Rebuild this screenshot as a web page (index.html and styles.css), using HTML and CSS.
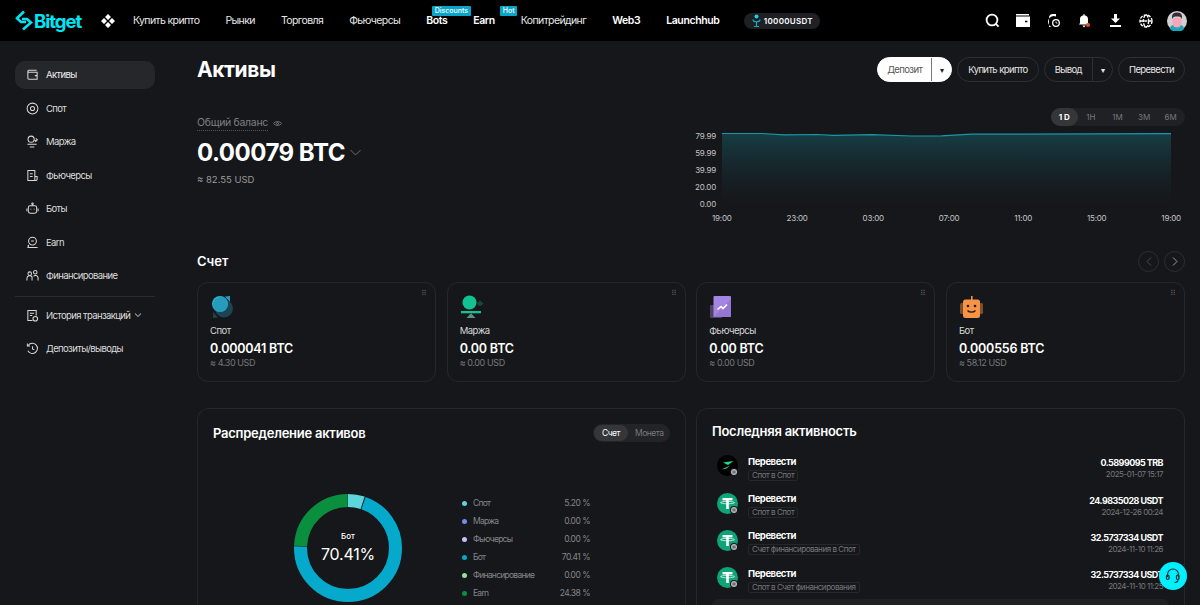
FILE: index.html
```html
<!DOCTYPE html>
<html lang="ru">
  <head>
    <meta charset="UTF-8" />
    <meta name="viewport" content="width=device-width, initial-scale=1.0" />
    <title>Активы</title>
    <link rel="stylesheet" href="styles.css">
  </head>
  <body>
    <svg class="defs" width="0" height="0">
      <symbol id="usdt" viewBox="0 0 21 21">
        <circle cx="10.5" cy="10.5" r="10.5" fill="#0fa37a" />
        <rect x="5.5" y="5" width="10" height="2.4" fill="#fff" />
        <rect x="9.2" y="5" width="2.6" height="11" fill="#fff" />
        <ellipse cx="10.5" cy="9.6" rx="7" ry="1.2" fill="none" stroke="#fff" stroke-width=".7" />
      </symbol>
      <symbol id="badge" viewBox="0 0 8 8">
        <circle cx="4" cy="4" r="4" fill="#16171a" />
        <circle cx="4" cy="4" r="3" fill="#b9babd" />
        <path d="M2.4 3.2h3.2M2.4 4.8h3.2" stroke="#333" stroke-width=".8" />
      </symbol>
    </svg>

    <!-- Шапка -->
    <header class="topbar">
      <a class="logo">
        <svg width="18" height="21" viewBox="0 0 18 21" fill="none" stroke="#00e5f5" stroke-width="2.6">
          <path d="M9 1.5 2 8.2l4 3.8h5" />
          <path d="M8 19.5l8-7-4-3.5H7" />
        </svg>
        <span>Bitget</span>
      </a>
      <svg class="apps" width="14" height="14" viewBox="0 0 14 14" fill="#fff">
        <path d="M7 0l3 3-3 3-3-3zM3 4l3 3-3 3-3-3zM11 4l3 3-3 3-3-3zM7 8l3 3-3 3-3-3z" />
      </svg>
      <nav class="topnav">
        <a>Купить крипто</a>
        <a>Рынки</a>
        <a>Торговля</a>
        <a>Фьючерсы</a>
        <a class="strong">Bots<span class="tag">Discounts</span></a>
        <a class="strong">Earn<span class="tag tag-hot">Hot</span></a>
        <a>Копитрейдинг</a>
        <a class="strong">Web3</a>
        <a class="strong">Launchhub</a>
      </nav>
      <div class="promo">
        <svg width="9" height="14" viewBox="0 0 9 14" fill="none" stroke="#1aa9bd" stroke-width="1.2">
          <circle cx="4.5" cy="2.5" r="2" fill="#1fd0e6" stroke="none" />
          <path d="M1 5.5c0 3 7 3 7 0M4.5 8v4M2 12.5h5" />
        </svg>
        10000USDT
      </div>
      <div class="top-icons">
        <svg width="15" height="15" viewBox="0 0 15 15" fill="none" stroke="#fff" stroke-width="1.8"><circle cx="7" cy="7" r="5.4" /><path d="M10.8 10.8 13.6 13.6" /></svg>
        <svg width="14" height="13" viewBox="0 0 14 13" fill="#fff"><path d="M0 0h13v1.6H0zM0 2.6h14V13H0zM9 6.7v1.6h2.4V6.7z" fill-rule="evenodd" /></svg>
        <svg width="12" height="13" viewBox="0 0 12 13" fill="#fff"><path d="M1 13V4a4 4 0 0 1 4-4h3v2.4A5 5 0 0 0 3.6 13z" /><circle cx="8" cy="9" r="3.3" fill="none" stroke="#fff" stroke-width="1.3" /><path d="M8 7.5V9h1.400" stroke="#fff" fill="none" stroke-width=".8" /></svg>
        <svg width="13" height="14" viewBox="0 0 13 14" fill="#fff"><path d="M5.5 0h1v1.200A4 4 0 0 1 10 5v4l1 1.500H1L2 9V5a4 4 0 0 1 3.5-3.800zM4.300 11.500h3.400L6 13.500z" /><circle cx="10" cy="11" r="2" fill="#f4481e" /></svg>
        <svg width="11" height="13" viewBox="0 0 11 13" fill="#fff"><path d="M4 0h3v4.500h3L5.500 9 1 4.500h3zM0 11h11v2H0z" /></svg>
        <svg width="14" height="14" viewBox="0 0 14 14" fill="none" stroke="#fff" stroke-width="1.4" stroke-dasharray="3 1.2"><circle cx="7" cy="7" r="6" /><ellipse cx="7" cy="7" rx="2.6" ry="6" /><path d="M1 7h12" /></svg>
        <svg width="20" height="20" viewBox="0 0 20 20">
          <circle cx="10" cy="10" r="10" fill="#cfd0d2" />
          <path d="M3 18c0-3.500 3-4.500 7-4.500s7 1 7 4.500a10 10 0 0 1-14 0z" fill="#18a6b8" />
          <path d="M5.500 7h9v5a4.500 4.500 0 0 1-9 0z" fill="#f8a5bb" />
          <path d="M5 8V5.500C5 3 7 1.500 10 1.500S15 3 15 5.500V8c-1-2-2-2.500-5-2.500S6 6 5 8z" fill="#3a2a33" />
        </svg>
      </div>
    </header>

    <div class="layout">
      <!-- Меню слева -->
      <aside class="sidebar">
        <a class="side-item active">
          <svg viewBox="0 0 14 14"><path d="M2 3.500V11a1 1 0 0 0 1 1h9V4.500H3a1 1 0 0 1-1-1 1 1 0 0 1 1-1h8.500M9.500 8.200h2.500" /></svg>
          Активы
        </a>
        <a class="side-item">
          <svg viewBox="0 0 14 14"><circle cx="7" cy="7" r="5.8" /><circle cx="7" cy="7" r="2.2" /></svg>
          Спот
        </a>
        <a class="side-item">
          <svg viewBox="0 0 14 14"><circle cx="5.5" cy="4.5" r="3.3" /><path d="M10.500 3.500l1.700 1.700-1.700 1.700-1.400-1.700M1.500 10h10M4 12.800h5" /></svg>
          Маржа
        </a>
        <a class="side-item">
          <svg viewBox="0 0 14 14"><path d="M2 1.500h7.500v11H2zM4.200 5h3M4.200 8h3M9.500 8h2.500v3a1.500 1.500 0 0 1-2.500 1" /></svg>
          Фьючерсы
        </a>
        <a class="side-item">
          <svg viewBox="0 0 14 14"><rect x="2.5" y="4" width="9" height="8" rx="2" /><circle cx="7" cy="1.800" r=".8" /><path d="M7 2.600V4M1 7v3M13 7v3M5.200 7.200v1M8.800 7.200v1" /></svg>
          Боты
        </a>
        <a class="side-item">
          <svg viewBox="0 0 14 14"><circle cx="7" cy="5.5" r="4.2" /><path d="M5.500 5.500h3M1.500 12.500h11M3 9.500c-1 1-1 2 0 3" /></svg>
          Earn
        </a>
        <a class="side-item">
          <svg viewBox="0 0 14 14"><circle cx="4" cy="5" r="1.9" /><circle cx="10" cy="3.5" r="1.9" /><path d="M1 12.500V10a3 3 0 0 1 5.500-1.500V12.500M8 7.800A3 3 0 0 1 13 9v3.500" /></svg>
          Финансирование
        </a>
        <hr class="side-line" />
        <a class="side-item">
          <svg viewBox="0 0 14 14"><path d="M7 12.500H2V1.500h9v5.500M4.200 4.500h4.500M4.200 7h2.500" /><circle cx="10" cy="10.5" r="2.5" /></svg>
          История транзакций
          <svg class="caret" viewBox="0 0 8 8"><path d="M1 2.500l3 3 3-3" /></svg>
        </a>
        <a class="side-item">
          <svg viewBox="0 0 14 14"><path d="M2.500 3.500A5.500 5.500 0 1 1 2 9.500M1.500 1.500v2.800h2.800M7 4.500V7.500l2 1" /></svg>
          Депозиты/выводы
        </a>
      </aside>

      <main class="content">
        <div class="page-head">
          <h1>Активы</h1>
          <div class="actions">
            <div class="btn split light"><span>Депозит</span><i>&#9662;</i></div>
            <div class="btn">Купить крипто</div>
            <div class="btn split"><span>Вывод</span><i>&#9662;</i></div>
            <div class="btn">Перевести</div>
          </div>
        </div>

        <section class="overview">
          <div class="balance">
            <div class="balance-label">
              <span>Общий баланс</span>
              <svg width="9" height="7" viewBox="0 0 9 7" fill="none" stroke="#77787c"><path d="M.5 3.500C2 1 7 1 8.500 3.500 7 6 2 6 .5 3.500z" /><circle cx="4.5" cy="3.5" r="1" /></svg>
            </div>
            <div class="balance-value">
              0.00079 BTC
              <svg width="11" height="7" viewBox="0 0 11 7" fill="none" stroke="#6b6c70"><path d="M.5 1l5 5 5-5" /></svg>
            </div>
            <div class="balance-usd">≈ 82.55 USD</div>
          </div>

          <div class="chart">
            <div class="range">
              <span class="on">1 D</span><span>1H</span><span>1M</span><span>3M</span><span>6M</span>
            </div>
            <div class="plot-row">
              <div class="y-axis">
                <span>79.99</span><span>59.99</span><span>39.99</span><span>20.00</span><span>0.00</span>
              </div>
              <svg class="plot" width="449" height="72" viewBox="0 0 450 72" preserveAspectRatio="none">
                <defs>
                  <linearGradient id="area" x1="0" y1="0" x2="0" y2="1">
                    <stop offset="0" stop-color="#16444c" stop-opacity=".85" />
                    <stop offset="1" stop-color="#16171a" stop-opacity=".4" />
                  </linearGradient>
                </defs>
                <path d="M0 1.500 40 1.500 62 2.800 95 2.500 112 3.300 150 2.700 190 4 220 3.900 250 2.200 300 2.200 450 1.700V72H0z" fill="url(#area)" />
                <path d="M0 1.500 40 1.500 62 2.800 95 2.500 112 3.300 150 2.700 190 4 220 3.900 250 2.200 300 2.200 450 1.700" fill="none" stroke="#1a97a6" stroke-width="1.2" />
              </svg>
            </div>
            <div class="x-axis">
              <span>19:00</span><span>23:00</span><span>03:00</span><span>07:00</span><span>11:00</span><span>15:00</span><span>19:00</span>
            </div>
          </div>
        </section>

        <div class="section-head">
          <h2>Счет</h2>
          <div class="arrows">
            <span class="dim"><svg width="6" height="9" viewBox="0 0 6 9"><path d="M5 .5l-4 4 4 4" /></svg></span>
            <span><svg width="6" height="9" viewBox="0 0 6 9"><path d="M1 .5l4 4-4 4" /></svg></span>
          </div>
        </div>

        <section class="accounts">
          <div class="card">
            <span class="grip">⠿</span>
            <svg class="card-icon" width="24" height="24" viewBox="0 0 24 24">
              <path d="M20 1v6l-5-5.500z" fill="#1f9fc0" />
              <path d="M3 23v-6l5 5.500z" fill="#20424d" />
              <circle cx="14" cy="13.500" r="9" fill="#1d4452" />
              <circle cx="10" cy="9" r="8" fill="#25b5d6" />
              <path d="M15 3a8 8 0 0 1-8 13.500A6 6 0 0 1 15 3z" fill="#2a8aa8" opacity=".6" />
            </svg>
            <div class="card-name">Спот</div>
            <div class="card-value">0.000041 BTC</div>
            <div class="card-usd">≈ 4.30 USD</div>
          </div>
          <div class="card">
            <span class="grip">⠿</span>
            <svg class="card-icon" width="24" height="24" viewBox="0 0 24 24">
              <circle cx="9.5" cy="7.5" r="7" fill="#12c293" />
              <path d="M20 5.500l3.500 3-3.500 3-3.500-3z" fill="#124a3c" />
              <rect x="1" y="16" width="20" height="2.3" fill="#12c293" />
              <path d="M11 18.300l4.500 4.700h-9z" fill="#5e8f7f" />
            </svg>
            <div class="card-name">Маржа</div>
            <div class="card-value">0.00 BTC</div>
            <div class="card-usd">≈ 0.00 USD</div>
          </div>
          <div class="card">
            <span class="grip">⠿</span>
            <svg class="card-icon" width="24" height="24" viewBox="0 0 24 24">
              <rect x="1" y="10" width="12" height="13" rx="1" fill="#4c4461" />
              <path d="M4.500 2a1 1 0 0 1 1-1H21a1 1 0 0 1 1 1v19a1 1 0 0 1-1 1H4.500z" fill="#a585e4" />
              <path d="M4.500 22 22 4v17a1 1 0 0 1-1 1z" fill="#8e70cc" opacity=".7" />
              <path d="M8.500 14.500l3.500-3 2 2 4-4" fill="none" stroke="#fff" stroke-width="1.6" />
            </svg>
            <div class="card-name">Фьючерсы</div>
            <div class="card-value">0.00 BTC</div>
            <div class="card-usd">≈ 0.00 USD</div>
          </div>
          <div class="card">
            <span class="grip">⠿</span>
            <svg class="card-icon" width="25" height="24" viewBox="0 0 25 24">
              <rect x="1" y="8" width="4" height="11" rx="1.5" fill="#7c4f2c" />
              <rect x="20" y="8" width="4" height="11" rx="1.5" fill="#7c4f2c" />
              <rect x="12" y="1" width="1.6" height="6" fill="#f59347" />
              <rect x="4" y="4.5" width="17" height="18.5" rx="2.5" fill="#f59347" />
              <circle cx="9" cy="11" r="1.3" fill="#2a1a0c" />
              <circle cx="16" cy="11" r="1.3" fill="#2a1a0c" />
              <path d="M8.500 15.500c2 2.200 6 2.200 8 0" fill="none" stroke="#2a1a0c" stroke-width="1.3" />
            </svg>
            <div class="card-name">Бот</div>
            <div class="card-value">0.000556 BTC</div>
            <div class="card-usd">≈ 58.12 USD</div>
          </div>
        </section>

        <section class="panels">
          <div class="panel">
            <div class="panel-head">
              <h3>Распределение активов</h3>
              <div class="switch"><span class="on">Счет</span><span>Монета</span></div>
            </div>
            <div class="dist">
              <div class="donut">
                <svg width="108" height="108" viewBox="0 0 108 108" fill="none" stroke-width="13">
                  <g transform="rotate(-90 54 54)">
                    <circle cx="54" cy="54" r="47.5" stroke="#5dd5dc" pathLength="100" stroke-dasharray="5 95" stroke-dashoffset="0" />
                    <circle cx="54" cy="54" r="47.5" stroke="#04a9cb" pathLength="100" stroke-dasharray="70.2 29.8" stroke-dashoffset="-5.3" />
                    <circle cx="54" cy="54" r="47.5" stroke="#0a8f3f" pathLength="100" stroke-dasharray="24.2 75.8" stroke-dashoffset="-75.7" />
                  </g>
                </svg>
                <div class="donut-text">
                  <small>Бот</small>
                  <b>70.41%</b>
                </div>
              </div>
              <ul class="legend">
                <li><i class="dot c1"></i><span>Спот</span><em>5.20 %</em></li>
                <li><i class="dot c2"></i><span>Маржа</span><em>0.00 %</em></li>
                <li><i class="dot c3"></i><span>Фьючерсы</span><em>0.00 %</em></li>
                <li><i class="dot c4"></i><span>Бот</span><em>70.41 %</em></li>
                <li><i class="dot c5"></i><span>Финансирование</span><em>0.00 %</em></li>
                <li><i class="dot c6"></i><span>Earn</span><em>24.38 %</em></li>
              </ul>
            </div>
          </div>

          <div class="panel activity">
            <h3>Последняя активность</h3>
            <div class="row">
              <div class="coin">
                <svg width="21" height="21" viewBox="0 0 21 21"><circle cx="10.5" cy="10.5" r="10.5" fill="#000" /><path d="M6 7.500 16.500 6 11 10zM4.500 14.500 13 10.500 9.500 13.500z" fill="#19e08c" /></svg>
                <svg class="badge" width="8" height="8"><use href="#badge" /></svg>
              </div>
              <div class="row-main"><b>Перевести</b><span class="pill">Спот в Спот</span></div>
              <div class="row-side"><b>0.5899095 TRB</b><span>2025-01-07 15:17</span></div>
            </div>
            <div class="row">
              <div class="coin">
                <svg width="21" height="21"><use href="#usdt" /></svg>
                <svg class="badge" width="8" height="8"><use href="#badge" /></svg>
              </div>
              <div class="row-main"><b>Перевести</b><span class="pill">Спот в Спот</span></div>
              <div class="row-side"><b>24.9835028 USDT</b><span>2024-12-26 00:24</span></div>
            </div>
            <div class="row">
              <div class="coin">
                <svg width="21" height="21"><use href="#usdt" /></svg>
                <svg class="badge" width="8" height="8"><use href="#badge" /></svg>
              </div>
              <div class="row-main"><b>Перевести</b><span class="pill">Счет финансирования в Спот</span></div>
              <div class="row-side"><b>32.5737334 USDT</b><span>2024-11-10 11:26</span></div>
            </div>
            <div class="row">
              <div class="coin">
                <svg width="21" height="21"><use href="#usdt" /></svg>
                <svg class="badge" width="8" height="8"><use href="#badge" /></svg>
              </div>
              <div class="row-main"><b>Перевести</b><span class="pill">Спот в Счет финансирования</span></div>
              <div class="row-side"><b>32.5737334 USDT</b><span>2024-11-10 11:25</span></div>
            </div>
            <div class="row hovered">
              <div class="coin">
                <svg width="21" height="21"><use href="#usdt" /></svg>
              </div>
            </div>
          </div>
        </section>
      </main>
    </div>

    <a class="support">
      <svg width="16" height="16" viewBox="0 0 16 16" fill="none" stroke="#0c2a30" stroke-width="1.2">
        <path d="M2.500 9V6.500a5.500 5.500 0 0 1 11 0V9" />
        <rect x="1.5" y="7" width="2.5" height="4.5" rx="1.2" />
        <rect x="11.5" y="7" width="2.5" height="4.5" rx="1.2" />
        <path d="M13 11.500c0 2-1.500 3-3.500 3" />
      </svg>
    </a>
  </body>
</html>
```

FILE: styles.css
```css
* {
  box-sizing: border-box;
}
html,
body {
  height: 605px;
  overflow: hidden;
}
body {
  margin: 0;
  font-family: Inter, "Liberation Sans", sans-serif;
  background: #16171a;
  color: #fff;
  font-size: 11px;
}
h1,
h2,
h3 {
  margin: 0;
}
.defs {
  position: absolute;
}

/* Шапка */
.topbar {
  height: 41px;
  background: #000;
  display: flex;
  align-items: center;
  padding: 0 7.6px 0 15px;
}
.logo {
  display: flex;
  align-items: center;
  gap: 1px;
  color: #00e5f5;
  font-size: 18.5px;
  font-weight: 700;
  letter-spacing: -1px;
  width: 86px;
}
.apps {
  margin-right: 18px;
}
.topnav {
  display: flex;
  gap: 26px;
}
.topnav a {
  position: relative;
  font-size: 10.5px;
  letter-spacing: -0.61px;
  color: #e8e8e8;
}
.topnav a.strong {
  font-weight: 600;
  letter-spacing: -0.4px;
  color: #fff;
}
.tag {
  position: absolute;
  left: 6px;
  top: -8px;
  background: #08a5c8;
  color: #fff;
  font-size: 7px;
  font-weight: 500;
  letter-spacing: 0;
  line-height: 10px;
  padding: 0 2.5px;
  border-radius: 1px;
  white-space: nowrap;
}
.tag-hot {
  left: 27px;
}
.promo {
  margin-left: 25px;
  width: 76px;
  height: 16px;
  border-radius: 8px;
  background: #1e2023;
  display: flex;
  align-items: center;
  justify-content: center;
  gap: 3px;
  font-size: 8px;
  font-weight: 600;
  letter-spacing: 0.3px;
}
.top-icons {
  margin-left: auto;
  display: grid;
  grid-template-columns: repeat(7, 30.8px);
  justify-items: center;
  align-items: center;
}

/* Меню */
.layout {
  display: flex;
}
.sidebar {
  width: 197px;
  flex: none;
  padding: 20px 42px 0 15px;
}
.side-item {
  height: 28px;
  margin-bottom: 5.5px;
  display: flex;
  align-items: center;
  gap: 7px;
  padding: 0 0 1px 11px;
  border-radius: 10px;
  color: #dcdcdc;
  font-size: 9.5px;
  letter-spacing: -0.62px;
  white-space: nowrap;
}
.side-item.active {
  background: #26272b;
  color: #eee;
}
.side-item svg {
  width: 13px;
  height: 13px;
  fill: none;
  stroke: #d8d8d8;
  stroke-width: 1.1;
  flex: none;
}
.side-item svg.caret {
  width: 8px;
  height: 8px;
  stroke: #8a8b8f;
  margin-left: -3px;
}
.side-line {
  border: 0;
  border-top: 1px solid #2a2b2f;
  margin: 0 0 5px;
}

/* Основная часть */
.content {
  width: 988px;
  padding-top: 16px;
}
.page-head {
  display: flex;
  justify-content: space-between;
  align-items: center;
  height: 25px;
}
h1 {
  font-size: 21px;
  font-weight: 700;
  letter-spacing: -0.4px;
}
.actions {
  display: flex;
  gap: 5px;
}
.btn {
  height: 25px;
  border: 1px solid #2e2f33;
  border-radius: 13px;
  padding: 0 10px;
  display: flex;
  align-items: center;
  font-size: 9.5px;
  letter-spacing: -0.6px;
  color: #e6e6e6;
}
.btn.split {
  padding: 0;
}
.btn.split span {
  padding: 0 10px;
  height: 100%;
  display: flex;
  align-items: center;
  border-right: 1px solid #2e2f33;
}
.btn.split i {
  width: 19px;
  text-align: center;
  font-style: normal;
  font-size: 8px;
}
.btn.light {
  background: #fff;
  border-color: #fff;
  color: #555;
}
.btn.light span {
  width: 54px;
  justify-content: center;
  border-right-color: #777;
}
.btn.light i {
  color: #222;
}

.overview {
  display: flex;
  justify-content: space-between;
  margin-top: 26px;
  height: 141px;
}
.balance-label {
  margin-top: 8px;
  display: flex;
  align-items: center;
  gap: 5px;
  color: #7d7e82;
  font-size: 10.5px;
  letter-spacing: -0.3px;
}
.balance-label span {
  border-bottom: 1px dotted #55565a;
  padding-bottom: 1px;
}
.balance-value {
  margin-top: 7px;
  display: flex;
  align-items: center;
  gap: 5px;
  font-size: 24px;
  font-weight: 700;
  letter-spacing: -0.5px;
}
.balance-usd {
  margin-top: 7px;
  font-size: 9.5px;
  color: #9a9b9f;
}

.chart {
  width: 495px;
}
.range {
  width: 134px;
  height: 18px;
  margin-left: auto;
  border-radius: 9px;
  background: #202125;
  display: flex;
  align-items: center;
  font-size: 8px;
  color: #77787c;
}
.range span {
  width: 26.6px;
  text-align: center;
}
.range .on {
  height: 18px;
  line-height: 18px;
  border-radius: 9px;
  background: #35363a;
  color: #fff;
  font-weight: 700;
}
.plot-row {
  display: flex;
  justify-content: space-between;
  margin-top: 6px;
  width: 481px;
}
.plot {
  display: block;
}
.y-axis {
  width: 26px;
  height: 79px;
  margin-top: -1px;
  display: flex;
  flex-direction: column;
  justify-content: space-between;
  align-items: flex-end;
  font-size: 8px;
  letter-spacing: -0.2px;
  line-height: 11px;
  color: #c4c5c8;
}
.x-axis {
  display: flex;
  justify-content: space-between;
  width: 469px;
  margin: 3px 0 0 22px;
  font-size: 8px;
  letter-spacing: -0.2px;
  color: #c4c5c8;
}

.section-head {
  display: flex;
  justify-content: space-between;
  align-items: center;
  height: 22px;
  margin-top: 1px;
}
h2 {
  font-size: 13px;
  font-weight: 600;
}
.arrows {
  display: flex;
  gap: 5px;
}
.arrows span {
  width: 21px;
  height: 21px;
  border: 1px solid #2e2f33;
  border-radius: 50%;
  display: flex;
  align-items: center;
  justify-content: center;
}
.arrows svg {
  fill: none;
  stroke: #9a9b9f;
}
.arrows .dim svg {
  stroke: #4a4b4f;
}

.accounts {
  display: grid;
  grid-template-columns: repeat(4, 1fr);
  gap: 10.5px;
  margin-top: 10px;
}
.card {
  position: relative;
  height: 100px;
  border: 1px solid #26272b;
  border-radius: 11px;
  padding: 12px;
}
.card-icon {
  display: block;
  margin-bottom: 5px;
}
.grip {
  position: absolute;
  top: 5px;
  right: 8px;
  font-size: 8px;
  color: #55565a;
}
.card-name {
  font-size: 9.5px;
  letter-spacing: -0.5px;
  color: #d8d8d8;
  line-height: 13px;
}
.card-value {
  margin-top: 4px;
  font-size: 12.5px;
  font-weight: 600;
  letter-spacing: -0.2px;
  line-height: 15px;
}
.card-usd {
  font-size: 9px;
  letter-spacing: -0.4px;
  color: #77787c;
  line-height: 14px;
}

.panels {
  display: grid;
  grid-template-columns: 489px 489px;
  gap: 10px;
  margin-top: 26px;
}
.panel {
  height: 197px;
  overflow: hidden;
  border: 1px solid #26272b;
  border-bottom: 0;
  border-radius: 12px 12px 0 0;
  padding: 15px 15px 0;
}
h3 {
  font-size: 13px;
  font-weight: 600;
  letter-spacing: -0.25px;
}
.panel-head {
  display: flex;
  justify-content: space-between;
  align-items: center;
  height: 18px;
}
.switch {
  width: 77px;
  height: 18px;
  border-radius: 9px;
  background: #232428;
  display: flex;
  align-items: center;
  font-size: 8.5px;
  letter-spacing: -0.5px;
  color: #77787c;
}
.switch span {
  padding: 0 7px;
}
.switch .on {
  background: #35363a;
  color: #fff;
  line-height: 16px;
  border-radius: 8px;
  margin-left: 1px;
  padding: 0 8px;
}

.dist {
  display: flex;
  margin-top: 44px;
}
.donut {
  position: relative;
  width: 108px;
  height: 108px;
  margin: 8px 0 0 81px;
}
.donut svg {
  display: block;
}
.donut-text {
  position: absolute;
  top: 36px;
  left: 0;
  right: 0;
  text-align: center;
}
.donut-text small {
  display: block;
  font-size: 8px;
  font-weight: 500;
  line-height: 12px;
}
.donut-text b {
  display: block;
  font-size: 16px;
  font-weight: 400;
  letter-spacing: -0.2px;
  line-height: 24px;
}
.legend {
  list-style: none;
  margin: 8px 0 0 60px;
  padding: 0;
  width: 128px;
  font-size: 8.5px;
  letter-spacing: -0.5px;
  color: #85868a;
}
.legend li {
  display: flex;
  align-items: center;
  height: 18px;
}
.legend span {
  margin-left: 6px;
  letter-spacing: -0.75px;
}
.legend em {
  margin-left: auto;
  font-style: normal;
}
.dot {
  width: 5px;
  height: 5px;
  border-radius: 50%;
  flex: none;
}
.c1 { background: #5dd5dc; }
.c2 { background: #6f8fe8; }
.c3 { background: #cbbcf5; }
.c4 { background: #04a9cb; }
.c5 { background: #93e29a; }
.c6 { background: #0a8f3f; }

.activity h3 {
  line-height: 14px;
  margin-bottom: 11px;
}
.row {
  display: flex;
  align-items: center;
  height: 37.4px;
  padding: 0 6px 0 5px;
}
.coin {
  position: relative;
  width: 21px;
  height: 21px;
  flex: none;
  margin: 0 10px 4px 0;
}
.coin svg {
  display: block;
}
.coin .badge {
  position: absolute;
  right: 0;
  bottom: 0;
}
.row-main {
  display: flex;
  flex-direction: column;
  align-items: flex-start;
  gap: 2px;
}
.row-main b {
  font-size: 9.5px;
  font-weight: 700;
  letter-spacing: -0.45px;
  line-height: 13px;
}
.row-side b {
  font-size: 9px;
  font-weight: 700;
  letter-spacing: -0.55px;
  line-height: 13px;
}
.pill {
  border: 1px solid #26272b;
  border-radius: 2px;
  padding: 0 3px;
  font-size: 8px;
  letter-spacing: -0.45px;
  line-height: 9px;
  color: #77787c;
}
.row-side {
  margin-left: auto;
  display: flex;
  flex-direction: column;
  align-items: flex-end;
}
.row-side span {
  font-size: 8px;
  letter-spacing: -0.5px;
  color: #77787c;
}
.hovered {
  background: #1f2024;
  border-radius: 6px;
}

.support {
  position: fixed;
  left: 1159px;
  top: 562px;
  width: 28px;
  height: 28px;
  border-radius: 50%;
  background: #00f0ff;
  display: flex;
  align-items: center;
  justify-content: center;
}
```
